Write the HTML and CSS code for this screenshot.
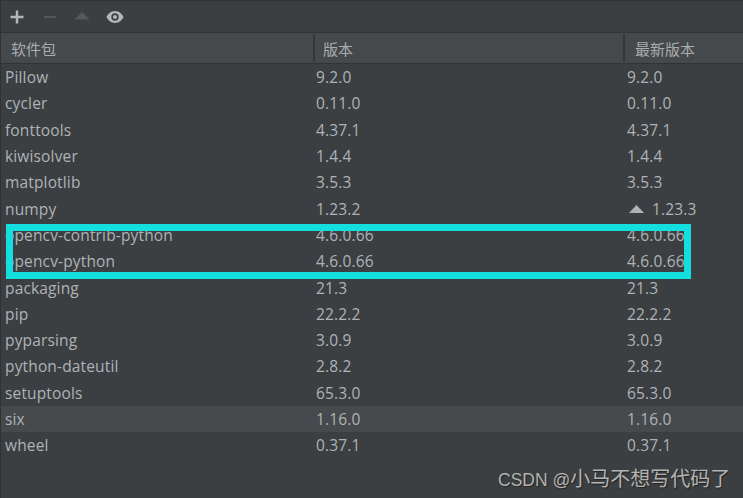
FILE: index.html
```html
<!DOCTYPE html>
<html lang="zh">
<head>
<meta charset="utf-8">
<title>软件包</title>
<link rel="stylesheet" href="styles.css">
</head>
<body>
<div class="panel">
  <div class="toolbar">
    <svg class="icon" viewBox="0 0 16 16"><path class="ic-on" d="M6.800 1.500h2.400v5.300h5.300v2.400H9.200v5.300H6.800V9.200H1.500V6.800h5.300z"/></svg>
    <svg class="icon" viewBox="0 0 16 16"><path class="ic-off" d="M2 7h12v2H2z"/></svg>
    <svg class="icon" viewBox="0 0 16 16"><path class="ic-off" d="M8 3l7.500 7.500H.5z"/></svg>
    <svg class="icon" viewBox="0 0 18 16"><path class="ic-on" fill-rule="evenodd" d="M9 2c4 0 7 2.800 8.500 6C16 11.200 13 14 9 14S2 11.200.5 8C2 4.800 5 2 9 2zm0 2.300a3.700 3.700 0 1 0 0 7.400 3.700 3.700 0 0 0 0-7.400zM9 6a2 2 0 1 1 0 4 2 2 0 0 1 0-4z"/></svg>
  </div>
  <div class="header">
    <div class="hcell">软件包</div>
    <div class="hcell">版本</div>
    <div class="hcell">最新版本</div>
  </div>
  <div class="rows">
    <div class="row"><span>Pillow</span><span>9.2.0</span><span>9.2.0</span></div>
    <div class="row"><span>cycler</span><span>0.11.0</span><span>0.11.0</span></div>
    <div class="row"><span>fonttools</span><span>4.37.1</span><span>4.37.1</span></div>
    <div class="row"><span>kiwisolver</span><span>1.4.4</span><span>1.4.4</span></div>
    <div class="row"><span>matplotlib</span><span>3.5.3</span><span>3.5.3</span></div>
    <div class="row"><span>numpy</span><span>1.23.2</span><span class="upd"><svg class="up" viewBox="0 0 15 8"><path d="M7.500 0L15 8H0z"/></svg>1.23.3</span></div>
    <div class="row"><span>opencv-contrib-python</span><span>4.6.0.66</span><span>4.6.0.66</span></div>
    <div class="row"><span>opencv-python</span><span>4.6.0.66</span><span>4.6.0.66</span></div>
    <div class="row"><span>packaging</span><span>21.3</span><span>21.3</span></div>
    <div class="row"><span>pip</span><span>22.2.2</span><span>22.2.2</span></div>
    <div class="row"><span>pyparsing</span><span>3.0.9</span><span>3.0.9</span></div>
    <div class="row"><span>python-dateutil</span><span>2.8.2</span><span>2.8.2</span></div>
    <div class="row"><span>setuptools</span><span>65.3.0</span><span>65.3.0</span></div>
    <div class="row selected"><span>six</span><span>1.16.0</span><span>1.16.0</span></div>
    <div class="row"><span>wheel</span><span>0.37.1</span><span>0.37.1</span></div>
  </div>
  <div class="mark"></div>
  <div class="watermark">CSDN @<span class="wm-cjk">小马不想写代码了</span></div>
</div>
</body>
</html>
```
FILE: styles.css
```css
* { box-sizing: border-box; }
html, body { margin: 0; padding: 0; }
body { width: 743px; height: 498px; overflow: hidden; background: #3c3f41; }
.panel {
  position: relative;
  width: 743px;
  height: 498px;
  background: #3c3f41;
  border-left: 1px solid #323232;
  border-top: 1px solid #323232;
  font-family: "Open Sans", "Noto Sans CJK SC", sans-serif;
  color: #adb3b8;
}
.toolbar {
  height: 32px;
  display: flex;
  align-items: center;
  gap: 16px;
  padding-left: 8px;
  border-bottom: 1px solid #323232;
}
.icon { width: 16px; height: 16px; flex: none; }
.icon:first-child { margin-right: 1px; }
.icon:last-child { width: 18px; }
.ic-on { fill: #b4b8ba; }
.ic-off { fill: #55585a; }
.header {
  height: 31px;
  display: grid;
  grid-template-columns: 314px 310px 1fr;
  background: #45494b;
  border-bottom: 1px solid #323232;
}
.hcell {
  display: flex;
  align-items: center;
  padding-left: 10px;
  font-size: 15px;
  font-family: "Noto Sans CJK SC", sans-serif;
  color: #a9adb0;
  border-right: 2px solid #333638;
  margin: 1px 0;
}
.hcell:nth-child(2) { padding-left: 8px; }
.hcell:last-child { border-right: 0; }
.rows { display: flex; flex-direction: column; }
.row {
  height: 26.3px;
  display: grid;
  grid-template-columns: 311px 311px 1fr;
  align-items: center;
  padding-left: 4px;
  font-size: 15.500px;
  letter-spacing: 0.15px;
  line-height: 20px;
}
.selected { background: #464a4c; }
.upd { display: flex; align-items: center; }
.up { width: 15px; height: 8px; margin: 0 8px 0 2px; fill: #afb1b3; }
.mark {
  position: absolute;
  left: 5px;
  top: 223px;
  width: 685px;
  height: 55px;
  border: 7px solid #14dfdf;
}
.watermark {
  position: absolute;
  left: 497px;
  top: 463px;
  font-size: 17.500px;
  line-height: 28px;
  font-family: "Liberation Sans", "Noto Sans CJK SC", sans-serif;
  color: #b3b3b3;
  text-shadow: 1px 1px 1px #222;
  white-space: nowrap;
}
.wm-cjk { font-size: 20px; font-family: "Noto Sans CJK SC", sans-serif; }
```
